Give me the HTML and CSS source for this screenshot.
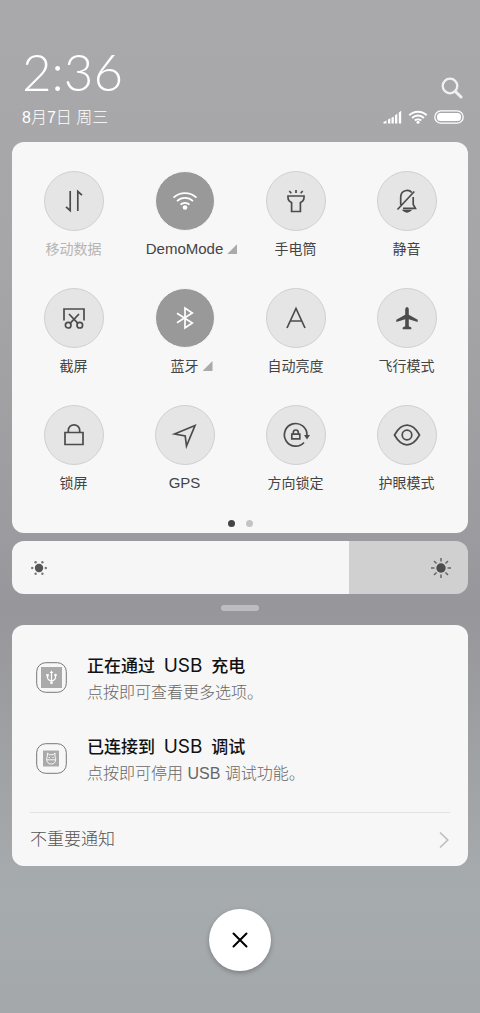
FILE: index.html
```html
<!DOCTYPE html>
<html lang="zh-CN">
<head>
<meta charset="utf-8">
<meta name="viewport" content="width=device-width, initial-scale=1">
<title>控制中心</title>
<link rel="stylesheet" href="styles.css">
</head>
<body>
<main class="shade">
  <header class="header">
    <div class="clock">
      <time class="time">2:36</time>
      <div class="date">8月7日 周三</div>
    </div>
    <div class="corner">
      <button class="search" aria-label="搜索">
        <svg width="22" height="22" viewBox="0 0 22 22" fill="none" stroke="#f0f0f0"><circle cx="9" cy="9" r="7.3" stroke-width="2.3"/><path d="M14.2 14.2L20 20" stroke-width="3" stroke-linecap="round"/></svg>
      </button>
      <div class="status">
        <svg width="19" height="14" viewBox="0 0 19 14" fill="#fff"><path d="M0.5 13.5v-1.5l3-1.5v3zM5 9.5l2.3-1.2v5.2H5zM8.5 7.7l2.3-1.3v7.1H8.500zM12 5.200l2.300-1.500v9.800H12zM15.800 2.400L18.200.7v12.800h-2.400z"/></svg>
        <svg width="20" height="14" viewBox="0 0 20 14" fill="none" stroke="#fff" stroke-width="2"><path d="M1.300 5.200a12.500 12.500 0 0 1 17.400 0M4.100 8a8.500 8.500 0 0 1 11.800 0M6.800 10.600a4.800 4.800 0 0 1 6.400 0"/><circle cx="10" cy="12.200" r="1.500" fill="#fff" stroke="none"/></svg>
        <svg width="30" height="14" viewBox="0 0 30 14"><rect x=".8" y=".8" width="28.400" height="12.400" rx="6.200" fill="none" stroke="#fff" stroke-width="1.300"/><rect x="3" y="3" width="24" height="8" rx="3.500" fill="#fff"/></svg>
      </div>
    </div>
  </header>

  <section class="panel toggles">
    <div class="grid">
      <button class="toggle muted"><span class="disc"><svg viewBox="0 0 30 30"><path d="M11.200 5v19.500L7 20.800M18.800 25V5.500L23 9.200"/></svg></span><span class="label">移动数据</span></button>
      <button class="toggle on"><span class="disc"><svg viewBox="0 0 30 30"><path d="M3.500 11.700a16.500 16.500 0 0 1 23 0M7 15.200a11.500 11.500 0 0 1 16 0M10.500 18.700a6.500 6.500 0 0 1 9 0"/><circle class="solid" cx="15" cy="21.500" r="2.300"/></svg></span><span class="label latin">DemoMode<i class="more"></i></span></button>
      <button class="toggle"><span class="disc"><svg viewBox="0 0 30 30"><path d="M7 10h16v1.500q0 3.500-3.600 5V25.500h-8.800v-9Q7 15 7 11.500zM15 4v3M8.300 5l2 2.200M21.700 5l-2 2.200"/></svg></span><span class="label">手电筒</span></button>
      <button class="toggle"><span class="disc"><svg viewBox="0 0 30 30"><path d="M8.700 19v-7.500C8.700 3.500 17 3.200 19.800 6.500M21.200 11v7.500l2.200 3.800H11M12 24.500q3 2.500 6 0zM5.500 23.500L22.300 5.500"/></svg></span><span class="label">静音</span></button>
      <button class="toggle"><span class="disc"><svg viewBox="0 0 30 30"><path d="M5 17.500V6h20v11.500M10 11l8.700 9.200M20 11l-8.700 9.200"/><circle cx="9.200" cy="22.200" r="2.800"/><circle cx="20.800" cy="22.200" r="2.800"/></svg></span><span class="label">截屏</span></button>
      <button class="toggle on"><span class="disc"><svg viewBox="0 0 30 30"><path d="M7 10.200L22.300 20 15 25V5l7.300 5L7 19.800"/></svg></span><span class="label">蓝牙<i class="more"></i></span></button>
      <button class="toggle"><span class="disc"><svg viewBox="0 0 30 30"><path d="M6 25L15 5.500 24 25M9.300 18h11.400"/></svg></span><span class="label">自动亮度</span></button>
      <button class="toggle"><span class="disc"><svg viewBox="0 0 30 30"><path class="solid" d="M15 4q1.800 0 1.800 2.500v5.300l8.900 5v2.200l-8.900-2.800v7l2.500 1.300v1.800h-8.600v-1.800l2.500-1.300v-7l-8.900 2.800v-2.200l8.900-5V6.500Q13.200 4 15 4z"/></svg></span><span class="label">飞行模式</span></button>
      <button class="toggle"><span class="disc"><svg viewBox="0 0 30 30"><path d="M6 12.500h18v12H6zM9.300 12.500V10.500a5.700 5.700 0 0 1 11.400 0v2"/></svg></span><span class="label">锁屏</span></button>
      <button class="toggle"><span class="disc"><svg viewBox="0 0 30 30"><path d="M4.500 14L25 5.500 16.500 26l-1.300-10z"/></svg></span><span class="label latin">GPS</span></button>
      <button class="toggle"><span class="disc"><svg viewBox="0 0 30 30"><path d="M26 15a11.300 11.300 0 1 0-3 7.500M10.800 14.200h8v4.600h-8zM12.300 14v-1.500a2.500 2.500 0 0 1 5 0V14"/><path class="solid" d="M23 15h6l-3 4.500z"/></svg></span><span class="label">方向锁定</span></button>
      <button class="toggle"><span class="disc"><svg viewBox="0 0 30 30"><path d="M2.500 15Q8 5.200 15 5.200T27.500 15Q22 24.800 15 24.800T2.500 15z"/><circle cx="15" cy="15" r="4.800"/></svg></span><span class="label">护眼模式</span></button>
    </div>
    <div class="dots"><span class="dot current"></span><span class="dot"></span></div>
  </section>

  <div class="brightness">
    <input class="slider" type="range" min="0" max="100" value="74" aria-label="亮度" style="--level: 74%">
    <svg class="sun low" width="18" height="18" viewBox="0 0 18 18" fill="#555"><circle cx="9" cy="9" r="4.200"/><g fill="#777"><circle cx="2.200" cy="9" r="1.200"/><circle cx="15.800" cy="9" r="1.200"/><circle cx="5.600" cy="3.200" r="1.200"/><circle cx="12.400" cy="3.200" r="1.200"/><circle cx="5.600" cy="14.800" r="1.200"/><circle cx="12.400" cy="14.800" r="1.200"/></g></svg>
    <svg class="sun high" width="22" height="22" viewBox="0 0 22 22" fill="#4c4c4c"><circle cx="11" cy="11" r="4.700"/><path stroke="#666" stroke-width="1.500" d="M11 1v3.500M11 17.500V21M1 11h3.500M17.500 11H21M4 4l2.500 2.500M15.500 15.500L18 18M4 18l2.500-2.500M15.500 6.500L18 4"/></svg>
  </div>

  <div class="handle"></div>

  <section class="panel notices">
    <article class="notice">
      <svg class="app" width="31" height="31" viewBox="0 0 31 31" fill="none"><rect x=".7" y=".7" width="29.600" height="29.600" rx="9" stroke="#777"/><path fill="#aaa" d="M5 5h21v21H5z"/><path stroke="#fff" stroke-width="1.200" d="M15.500 10v11M11.500 12.500v3q0 2.500 4 3.500 4-1 4-3.500v-3"/><g fill="#fff"><path d="M15.500 8.500l1.800 2.500h-3.600zM10.300 12h2.400v2.400h-2.400z"/><circle cx="19.500" cy="13" r="1.300"/><circle cx="15.500" cy="20.800" r="1.400"/></g></svg>
      <div class="copy">
        <h2 class="title">正在通过 <span class="word">USB</span> 充电</h2>
        <p class="text">点按即可查看更多选项。</p>
      </div>
    </article>
    <article class="notice">
      <svg class="app" width="31" height="31" viewBox="0 0 31 31" fill="none"><rect x=".7" y=".7" width="29.600" height="29.600" rx="9" stroke="#777"/><path fill="#aaa" d="M7 7.500h16v16H7z"/><path stroke="#fff" stroke-width=".9" d="M11.500 13l-.2-3 2 1.700h3.800l2-1.700-.2 3q1 1.500.8 3.500-.3 4.500-4.500 4.500t-4.500-4.500q-.2-2 .8-3.500zM10.800 16.800h8.800M12.700 14.500h1.300M16.400 14.500h1.300"/></svg>
      <div class="copy">
        <h2 class="title">已连接到 <span class="word">USB</span> 调试</h2>
        <p class="text">点按即可停用 USB 调试功能。</p>
      </div>
    </article>
    <a class="minor" href="#minor">不重要通知
      <svg width="10" height="18" viewBox="0 0 10 18" fill="none" stroke="#bdbdbd" stroke-width="1.600"><path d="M1 1.500L8.800 9 1 16.500"/></svg>
    </a>
  </section>

  <button class="close" aria-label="清除通知">
    <svg width="16" height="16" viewBox="0 0 16 16" stroke="#000" stroke-width="2" stroke-linecap="round"><path d="M1.500 1.500l13 13M14.500 1.500l-13 13"/></svg>
  </button>
</main>
</body>
</html>
```
FILE: styles.css
```css
* { box-sizing: border-box; }

body {
  margin: 0;
  min-height: 100vh;
  font-family: "Liberation Sans", "Noto Sans CJK SC", sans-serif;
  font-weight: 300;
  color: #444;
  background: linear-gradient(180deg, #a9a9ab 0%, #a6a6a8 25%, #9c9b9f 52%, #97969b 60%, #a1a4a7 78%, #a6abae 88%, #a4a8ab 100%);
}

button {
  border: 0;
  padding: 0;
  background: none;
  font: inherit;
  color: inherit;
}

svg { display: block; }

.shade {
  display: flex;
  flex-direction: column;
  padding: 44px 12px 41px;
}

.header {
  display: flex;
  justify-content: space-between;
  align-items: flex-end;
  padding: 0 4px 12px 10px;
  color: #fff;
}

.time {
  display: block;
  font-family: Lato, sans-serif;
  font-weight: 300;
  font-size: 51px;
  line-height: 56px;
}

.date {
  font-size: 16px;
  line-height: 24px;
  padding-top: 6px;
}

.corner {
  display: flex;
  flex-direction: column;
  align-items: flex-end;
  gap: 11px;
  padding-bottom: 6px;
}

.search { padding-right: 1px; }

.status {
  display: flex;
  gap: 6px;
}

.panel {
  background: #f7f7f7;
  border-radius: 12px;
}

.toggles { padding: 29px 6px 5px; }

.grid {
  display: grid;
  grid-template-columns: repeat(4, 1fr);
  row-gap: 29px;
}

.toggle {
  display: flex;
  flex-direction: column;
  align-items: center;
  gap: 8px;
}

.disc {
  display: grid;
  place-items: center;
  width: 60px;
  height: 60px;
  border: 1px solid #d0d0d0;
  border-radius: 50%;
  background: #e5e5e5;
  color: #4c4c4c;
}

.disc svg {
  width: 30px;
  height: 30px;
  fill: none;
  stroke: currentColor;
  stroke-width: 1.7;
}

.disc .solid {
  fill: currentColor;
  stroke: none;
}

.on .disc {
  border-color: #f7f7f7;
  background: #999;
  color: #fff;
}

.label {
  position: relative;
  font-size: 14px;
  font-weight: 400;
  line-height: 20px;
}

.latin { font-size: 15px; }

.muted .label { color: #b5b5b5; }

.more {
  position: absolute;
  left: 100%;
  bottom: 5px;
  width: 10px;
  height: 10px;
  margin-left: 4px;
  background: #aaa;
  clip-path: polygon(100% 0, 100% 100%, 0 100%);
}

.dots {
  display: flex;
  justify-content: center;
  gap: 11px;
  padding: 27px 0 1px;
}

.dot {
  width: 7px;
  height: 7px;
  border-radius: 50%;
  background: #c4c4c4;
}

.current { background: #444; }

.brightness {
  position: relative;
  margin-top: 8px;
}

.slider {
  display: block;
  width: 100%;
  height: 53px;
  margin: 0;
  appearance: none;
  border-radius: 12px;
  background: linear-gradient(90deg, #f6f6f6 var(--level), #d0d0d0 var(--level));
}

.slider::-webkit-slider-thumb {
  appearance: none;
  width: 1px;
  height: 53px;
}

.sun {
  position: absolute;
  top: 0;
  bottom: 0;
  margin: auto;
  pointer-events: none;
}

.low { left: 18px; }
.high { right: 16px; }

.handle {
  align-self: center;
  width: 38px;
  height: 6px;
  margin: 11px 0 14px;
  border-radius: 3px;
  background: #bdbcc0;
}

.notices { padding: 29px 18px 0; }

.notice {
  display: flex;
  align-items: flex-start;
  gap: 20px;
  padding-left: 6px;
}

.notice + .notice { margin-top: 29px; }

.app { margin-top: 8px; }

.title,
.text {
  margin: 0;
  line-height: 26px;
}

.title {
  font-size: 17px;
  font-weight: 500;
  color: #111;
}

.word {
  font-family: Inter, sans-serif;
  font-size: 19px;
  font-weight: 400;
  line-height: 20px;
  margin: 0 4px;
}

.text {
  font-size: 16px;
  color: #666;
}

.minor {
  display: flex;
  justify-content: space-between;
  align-items: center;
  margin-top: 25px;
  padding: 14px 1px 13px 0;
  border-top: 1px solid #e3e3e3;
  font-size: 17px;
  line-height: 26px;
  color: #555;
  text-decoration: none;
}

.close {
  display: grid;
  place-items: center;
  align-self: center;
  width: 62px;
  height: 62px;
  margin-top: 43px;
  border-radius: 50%;
  background: #fff;
  box-shadow: 0 2px 5px rgba(0, 0, 0, 0.25);
}
```
